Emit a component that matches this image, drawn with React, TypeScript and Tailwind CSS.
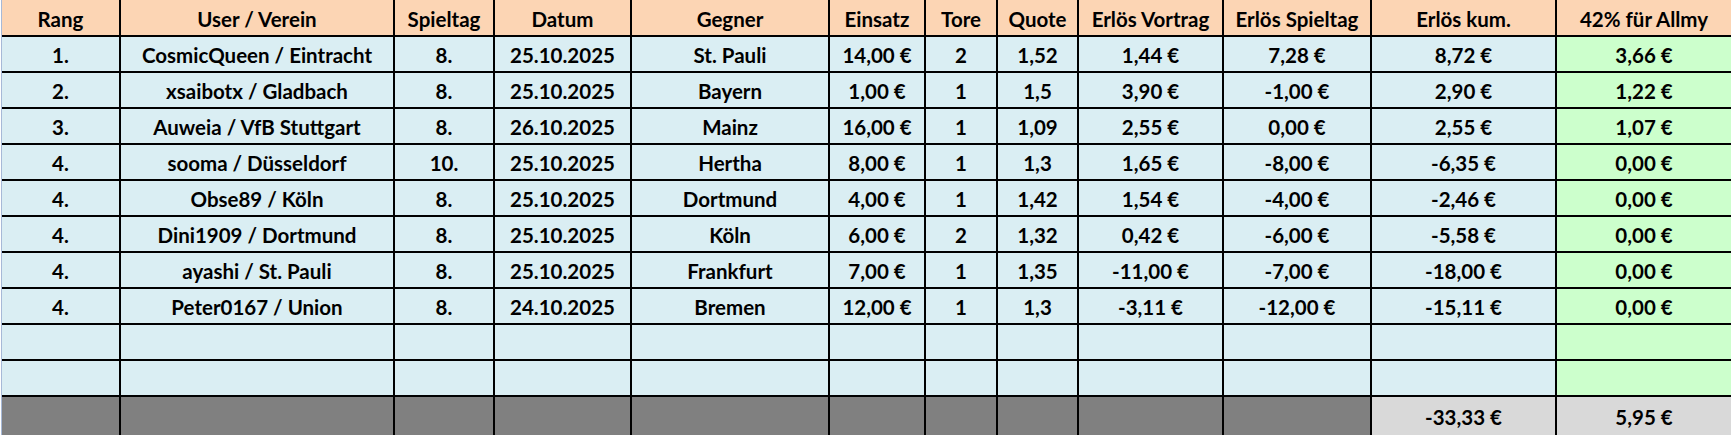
import React from "react";

const headers = [
  "Rang",
  "User / Verein",
  "Spieltag",
  "Datum",
  "Gegner",
  "Einsatz",
  "Tore",
  "Quote",
  "Erlös Vortrag",
  "Erlös Spieltag",
  "Erlös kum.",
  "42% für Allmy",
];

const rows: string[][] = [
  ["1.", "CosmicQueen / Eintracht", "8.", "25.10.2025", "St. Pauli", "14,00 €", "2", "1,52", "1,44 €", "7,28 €", "8,72 €", "3,66 €"],
  ["2.", "xsaibotx / Gladbach", "8.", "25.10.2025", "Bayern", "1,00 €", "1", "1,5", "3,90 €", "-1,00 €", "2,90 €", "1,22 €"],
  ["3.", "Auweia / VfB Stuttgart", "8.", "26.10.2025", "Mainz", "16,00 €", "1", "1,09", "2,55 €", "0,00 €", "2,55 €", "1,07 €"],
  ["4.", "sooma / Düsseldorf", "10.", "25.10.2025", "Hertha", "8,00 €", "1", "1,3", "1,65 €", "-8,00 €", "-6,35 €", "0,00 €"],
  ["4.", "Obse89 / Köln", "8.", "25.10.2025", "Dortmund", "4,00 €", "1", "1,42", "1,54 €", "-4,00 €", "-2,46 €", "0,00 €"],
  ["4.", "Dini1909 / Dortmund", "8.", "25.10.2025", "Köln", "6,00 €", "2", "1,32", "0,42 €", "-6,00 €", "-5,58 €", "0,00 €"],
  ["4.", "ayashi / St. Pauli", "8.", "25.10.2025", "Frankfurt", "7,00 €", "1", "1,35", "-11,00 €", "-7,00 €", "-18,00 €", "0,00 €"],
  ["4.", "Peter0167 / Union", "8.", "24.10.2025", "Bremen", "12,00 €", "1", "1,3", "-3,11 €", "-12,00 €", "-15,11 €", "0,00 €"],
  ["", "", "", "", "", "", "", "", "", "", "", ""],
  ["", "", "", "", "", "", "", "", "", "", "", ""],
];

const totals = ["", "", "", "", "", "", "", "", "", "", "-33,33 €", "5,95 €"];

const cell =
  "flex items-center justify-center whitespace-nowrap text-[20.5px] font-bold text-black leading-none pt-[3px]";

export default function App() {
  return (
    <div
      className="w-[1731px] h-[435px] overflow-hidden bg-white pl-[1px]"
      style={{ fontFamily: "Lato, 'Open Sans', sans-serif" }}
    >
      <div className="border-l border-[#a7b9d7] h-full">
        <div className="grid grid-cols-[117px_272px_98px_135px_196px_94px_70px_79px_143px_146px_183px_174px] grid-rows-[35px_repeat(10,34px)_38px] gap-[2px] bg-black">
          {headers.map((h, i) => (
            <div key={"h" + i} className={`${cell} bg-[#fcd5b4]`}>
              {h}
            </div>
          ))}
          {rows.map((r, ri) =>
            r.map((c, ci) => (
              <div
                key={ri + "-" + ci}
                className={`${cell} ${ci === 11 ? "bg-[#ccffcc]" : "bg-[#daeef3]"}`}
              >
                {c}
              </div>
            ))
          )}
          {totals.map((t, i) => (
            <div
              key={"t" + i}
              className={`${cell} ${i >= 10 ? "bg-[#d9d9d9]" : "bg-[#808080]"}`}
            >
              {t}
            </div>
          ))}
        </div>
      </div>
    </div>
  );
}
